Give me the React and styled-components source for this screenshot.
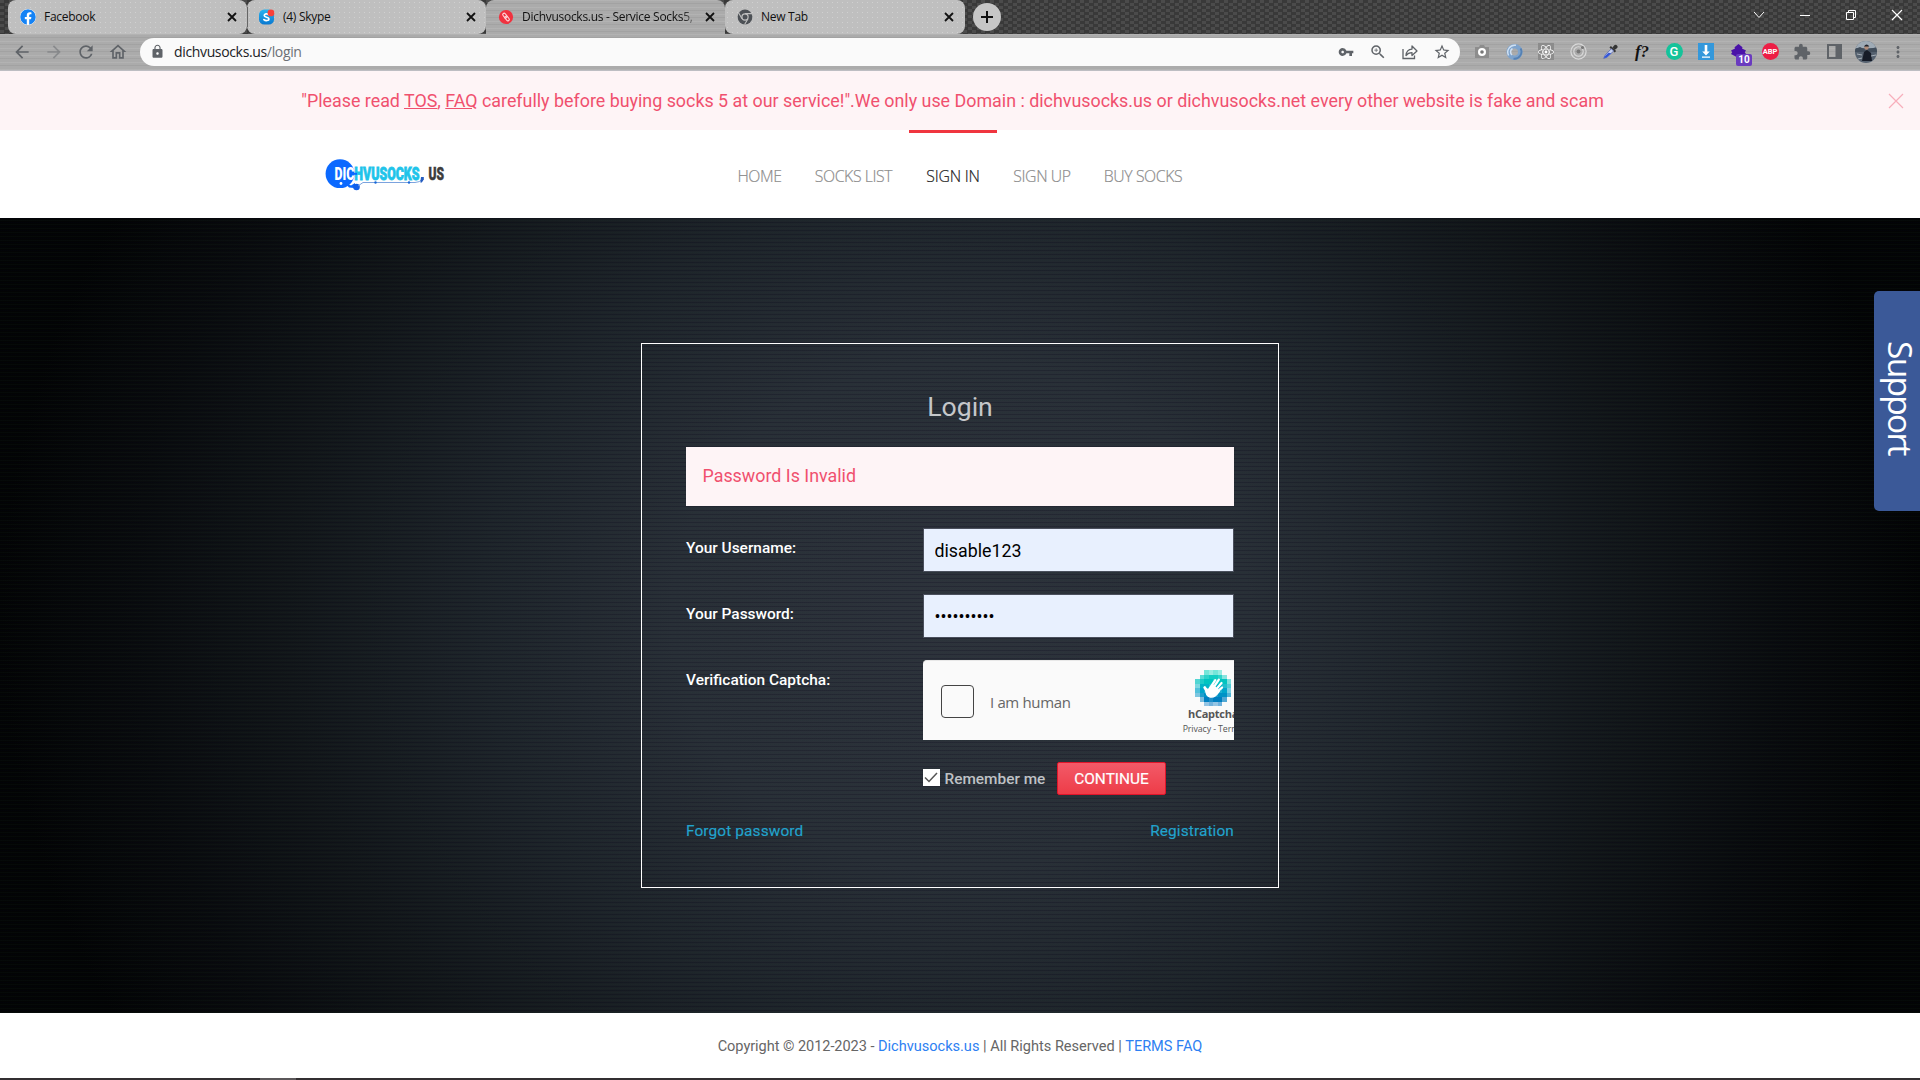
import React from 'react';
import styled, { createGlobalStyle, css } from 'styled-components';
import {
  MdArrowBack, MdArrowForward, MdRefresh, MdOutlineHome, MdLock, MdVpnKey,
  MdZoomIn, MdStarBorder, MdExtension, MdMoreVert,
} from 'react-icons/md';
import { FaFacebook, FaReact } from 'react-icons/fa';

const GlobalStyle = createGlobalStyle`
  * { box-sizing: border-box; }
  body { margin: 0; background: #fff; font-family: Roboto, sans-serif; overflow: hidden; }
  a { color: inherit; }
`;

const ui = css`font-family: "Open Sans", "Noto Sans", sans-serif;`;

const Screen = styled.div`
  display: flex;
  flex-direction: column;
  width: 1920px;
  height: 1080px;
  overflow: hidden;
`;

/* ---------- browser window ---------- */
const TitleBar = styled.div`
  display: flex;
  height: 34px;
  padding-left: 8px;
  background: repeating-conic-gradient(#393939 0 25%, #4b4b4b 0 50%) 0 0 / 9px 6px;
`;

const metal = css`
  background:
    repeating-linear-gradient(180deg, rgba(255,255,255,.09) 0 1px, transparent 1px 3px, rgba(0,0,0,.05) 3px 4px, transparent 4px 7px),
    #ababab;
`;

const Tab = styled.div`
  ${ui}
  display: flex;
  align-items: center;
  width: ${(p) => p.$width}px;
  height: 34px;
  padding: 0 ${(p) => p.$end || 9}px 0 12px;
  border-radius: 8px;
  font-size: 12px;
  letter-spacing: -0.28px;
  color: #111;
  ${(p) => (p.$active ? css`${metal} border-radius: 8px 8px 0 0;` : css`
    background: radial-gradient(circle, #d0d0d0 0.6px, transparent 1px) 0 0 / 5px 5px, #bfbfbf;
  `)}
`;

const TabDivider = styled.span`
  width: 1px;
  height: 20px;
  margin: 7px -1px 0 0;
  background: #666;
  z-index: 1;
`;

const TabIcon = styled.span`
  display: flex;
  width: 16px;
  height: 16px;
  margin-right: 8px;
`;

const TabTitle = styled.span`
  flex: 1;
  overflow: hidden;
  white-space: nowrap;
  line-height: 18px;
  ${(p) => p.$fade && css`mask-image: linear-gradient(90deg, #000 88%, transparent 98%);`}
`;

const FacebookMark = styled(FaFacebook)`
  border-radius: 50%;
  background: #fff;
  color: #1583f5;
`;

const NewTab = styled.div`
  display: flex;
  align-items: center;
  justify-content: center;
  width: 28px;
  height: 28px;
  margin: 3px 0 0 8px;
  border-radius: 50%;
  background: #c6c6c6;
`;

const WindowButtons = styled.div`
  display: flex;
  margin-left: auto;
  height: 29px;
  align-items: center;
  & > svg { width: 46px; height: 14px; }
`;

const Toolbar = styled.div`
  ${metal}
  display: flex;
  align-items: center;
  height: 37px;
  padding: 0 0 1px 11px;
  border-bottom: 1px solid #bdbdc2;
  color: #5f6368;
`;

const NavButton = styled.span`
  display: flex;
  justify-content: center;
  width: 32px;
  font-size: 20px;
  opacity: ${(p) => (p.$dim ? 0.45 : 1)};
  margin-left: ${(p) => (p.$first ? -5 : 0)}px;
`;

const AddressBar = styled.div`
  ${ui}
  display: flex;
  align-items: center;
  flex: none;
  width: 1320px;
  height: 28px;
  margin-left: 6px;
  padding: 0 2px 0 10px;
  border-radius: 14px;
  background: #fafafa;
  font-size: 14px;
  letter-spacing: -0.35px;
  & > svg { flex: none; }
`;

const Url = styled.span`
  flex: 1;
  margin-left: 9px;
  line-height: 20px;
  color: #202124;
  span { color: #6c7075; }
`;

const AddressIcon = styled.span`
  display: flex;
  justify-content: center;
  width: 32px;
  font-size: ${(p) => p.$size || 18}px;
`;

const Extensions = styled.div`
  display: flex;
  align-items: center;
  margin-left: 6px;
`;

const Extension = styled.span`
  display: flex;
  align-items: center;
  justify-content: center;
  position: relative;
  flex: none;
  width: 32px;
  height: 20px;
  font-size: 18px;
`;

const Formula = styled.span`
  font: italic bold 17px/18px "Liberation Serif", serif;
  color: #111;
`;

const Disc = styled.span`
  font: ${(p) => p.$font};
  width: 17px;
  height: 17px;
  border-radius: 50%;
  text-align: center;
  color: #fff;
  background: ${(p) => p.$color};
`;

const CountBadge = styled.span`
  position: absolute;
  left: 14px;
  top: 12px;
  width: 16px;
  height: 12px;
  border-radius: 2px;
  background: #6a3bbf;
  color: #fff;
  font: bold 10px/12px Roboto, sans-serif;
  text-align: center;
`;

const Avatar = styled.span`
  width: 22px;
  height: 22px;
  border-radius: 50%;
  overflow: hidden;
  svg { display: block; }
`;

/* ---------- site ---------- */
const Notice = styled.div`
  display: flex;
  align-items: center;
  justify-content: center;
  height: 59px;
  padding: 0 15px 1px 0;
  position: relative;
  background: #fef4f6;
  color: #f0506e;
  font-size: 17.86px;
  white-space: pre;
`;

const NoticeClose = styled.svg`
  position: absolute;
  right: 16px;
  top: 22px;
  color: #f8aebb;
`;

const Header = styled.header`
  display: flex;
  height: 88px;
  background: #fff;
`;

const LogoBox = styled.div`
  width: 721px;
  padding: 26px 0 0 322px;
`;

const NavItem = styled.a`
  ${ui}
  width: ${(p) => p.$width}px;
  height: 88px;
  border-top: 3px solid ${(p) => (p.$active ? '#f0353f' : 'transparent')};
  padding-top: 1px;
  line-height: 84px;
  text-align: center;
  font-size: 15.8px;
  font-weight: 300;
  letter-spacing: ${(p) => (p.$active ? -0.2 : -0.4)}px;
  color: ${(p) => (p.$active ? '#222' : '#8c8c8c')};
  -webkit-text-stroke: 0.2px currentColor;
`;

const Hero = styled.main`
  display: flex;
  justify-content: center;
  align-items: flex-start;
  position: relative;
  height: 795px;
  padding-top: 125px;
  background:
    repeating-linear-gradient(180deg, rgba(0,0,20,.2) 0 1px, transparent 1px 2px, rgba(30,60,50,.1) 2px 3px, transparent 3px 4px),
    radial-gradient(ellipse 960px 850px at 50% 50%, #2e333c 0%, #292f37 30%, #1e242a 50%, #121619 70%, #090b0d 86%, #030404 100%);
`;

const LoginBox = styled.section`
  width: 638px;
  height: 545px;
  padding: 48px 44px 0;
  border: 1px solid #fff;
`;

const Title = styled.h1`
  margin: 0 0 25px;
  font-size: 26.6px;
  font-weight: 400;
  line-height: 30px;
  text-align: center;
  color: #c5c7ca;
`;

const Alert = styled.div`
  height: 59px;
  padding-left: 16.5px;
  background: #fef4f6;
  color: #f0506e;
  font-size: 17.86px;
  line-height: 58px;
`;

const Row = styled.div`
  display: flex;
  margin-top: 22px;
  height: ${(p) => p.$height}px;
`;

const Label = styled.label`
  width: 237px;
  font-size: 15.45px;
  font-weight: 500;
  line-height: 40px;
  color: #fff;
`;

const Input = styled.input`
  width: 311px;
  height: 44px;
  padding: 0 10.5px;
  border: 1px solid #4a4f5c;
  border-radius: 0;
  outline: none;
  background: #e8f0fe;
  color: #000;
  font: 17.8px Roboto, sans-serif;
`;

const Captcha = styled.div`
  ${ui}
  display: flex;
  align-items: center;
  width: 311px;
  height: 80px;
  padding-left: 18px;
  overflow: hidden;
  border-radius: 4px 0 0 0;
  border-top: 1px solid #e8e8e8;
  background: #fafafa;
  color: #555;
  font-size: 15px;
  letter-spacing: -0.35px;
`;

const CaptchaCheck = styled.span`
  flex: none;
  width: 33px;
  height: 33px;
  margin: 2px 16px 0 0;
  border: 1px solid #444;
  border-radius: 4px;
`;

const CaptchaText = styled.span`
  flex: none;
  width: 188px;
  margin-top: 3px;
  color: #666;
`;

const CaptchaBrand = styled.span`
  flex: none;
  display: flex;
  flex-direction: column;
  align-items: center;
  width: 70px;
  align-self: flex-start;
  margin-top: 9px;
  white-space: nowrap;
`;

const BrandName = styled.b`
  margin-top: 1px;
  font-size: 11px;
  line-height: 14px;
  letter-spacing: -0.25px;
`;

const BrandLinks = styled.span`
  margin-top: 1px;
  font-size: 8.8px;
  line-height: 14px;
  letter-spacing: -0.1px;
`;

const Actions = styled.div`
  display: flex;
  align-items: flex-start;
  height: 33px;
  margin: 22px 0 26px 237px;
`;

const CheckBox = styled.span`
  width: 17px;
  height: 17px;
  margin-top: 7px;
  background: #fff;
  svg { display: block; }
`;

const Remember = styled.span`
  width: 112.5px;
  margin-left: 4.5px;
  font-size: 15.4px;
  line-height: 34px;
  font-weight: 500;
  color: #bfc1c5;
`;

const Continue = styled.button`
  width: 109px;
  height: 33px;
  padding: 1px 0 0;
  border: 1px solid #e1152a;
  border-radius: 2px;
  background: linear-gradient(#f25a68, #ee3c48);
  color: #fff;
  font: 400 15.4px/30px Roboto, sans-serif;
  -webkit-text-stroke: 0.2px #fff;
`;

const Links = styled.div`
  display: flex;
  justify-content: space-between;
  font-size: 15.4px;
  line-height: 20px;
  letter-spacing: 0.12px;
  color: #22a3cd;
  -webkit-text-stroke: 0.15px currentColor;
`;

const Support = styled.div`
  ${ui}
  position: absolute;
  right: 0;
  top: 73px;
  display: flex;
  align-items: center;
  justify-content: center;
  width: 46px;
  height: 220px;
  padding: 0 0 7px 8px;
  border-radius: 5px 0 0 5px;
  background: #3b5998;
  color: #fff;
  font-size: 33.5px;
  line-height: 36px;
  letter-spacing: -1.7px;
  writing-mode: vertical-rl;
`;

const Footer = styled.footer`
  height: 65px;
  font-size: 14.56px;
  line-height: 66px;
  text-align: center;
  color: #666;
  background: #fff;
`;

const Lead = styled.span`letter-spacing: -0.05px;`;
const Blue = styled.span`color: #2d80f2;`;

const TaskBar = styled.div`
  height: 2px;
  padding-left: 260px;
  background: #332f31;
`;

const TaskItem = styled.div`
  width: 36px;
  height: 2px;
  background: #5b5759;
`;

/* ---------- drawings ---------- */
const Cross = () => (
  <svg width="12" height="12" viewBox="0 0 12 12" stroke="#111" strokeWidth="1.8"><path d="M2 2l8 8M10 2l-8 8" /></svg>
);

const SkypeIcon = () => (
  <svg width="17" height="17" viewBox="0 0 17 17">
    <defs><linearGradient id="sky" x2="0" y2="1"><stop stopColor="#27b4f0" /><stop offset="1" stopColor="#0a78d0" /></linearGradient></defs>
    <rect x="0" y="0" width="16" height="16" rx="5.5" fill="url(#sky)" />
    <path d="M10.6 5.4C8.8 4 5.4 4.6 5.6 6.6c.2 2 5 1.2 5 3.4 0 2-3.6 2.3-5.4.7" fill="none" stroke="#fff" strokeWidth="1.8" strokeLinecap="round" />
    <circle cx="12.7" cy="3.7" r="3.6" fill="#f9423a" />
  </svg>
);

const SocksIcon = () => (
  <svg width="16" height="16" viewBox="0 0 16 16">
    <circle cx="8" cy="8" r="7.1" fill="#f0323f" />
    <g fill="none" stroke="#ffd9dc" strokeWidth="1.1" transform="rotate(-38 8 8)"><rect x="6.6" y="3.6" width="2.8" height="5.2" rx="1.4" /><rect x="6.6" y="7.2" width="2.8" height="5.2" rx="1.4" /></g>
  </svg>
);

const ChromeIcon = () => (
  <svg width="16" height="16" viewBox="0 0 16 16">
    <circle cx="8" cy="8" r="7.4" fill="#4d5156" />
    <circle cx="8" cy="8" r="3.7" fill="#c0c0c0" />
    <circle cx="8" cy="8" r="2.5" fill="#4d5156" />
    <path d="M8 4.6h7M5 9.7L1.6 3.8M11 9.7l-3.4 5.9" stroke="#c0c0c0" strokeWidth="1.1" />
  </svg>
);

const ShareIcon = () => (
  <svg width="16" height="16" viewBox="0 0 16 16" fill="none" stroke="#5f6368" strokeWidth="1.3">
    <path d="M1 5v9.5h11.5V11.5" />
    <path d="M4 11.5c.3-4 2.500-6.200 6-6.400V2l5 5-5 4.500V8.600c-2.800 0-4.500.8-6 2.900z" strokeLinejoin="round" />
  </svg>
);

const CameraIcon = () => (
  <svg width="14" height="13" viewBox="0 0 14 13"><path d="M0 2h4l1-2h4l1 2h4v11H0z" fill="#8d8d8d" /><circle cx="7" cy="7" r="4" fill="#fff" /><circle cx="7" cy="7" r="1.8" fill="#777" /></svg>
);

const SwirlIcon = () => (
  <svg width="17" height="18" viewBox="0 0 17 18" fill="none">
    <circle cx="8.5" cy="9" r="5.8" stroke="#7ea3cc" strokeWidth="4.6" />
    <path d="M2.6 12.5A7 7 0 0 1 10 2.3M6 12a4 4 0 0 1 .5-6.5" stroke="#cfe0f2" strokeWidth="1.5" />
    <path d="M14.6 5.5A7 7 0 0 1 7.5 15.7" stroke="#5581b3" strokeWidth="1.8" />
  </svg>
);

const TargetIcon = () => (
  <svg width="17" height="17" viewBox="0 0 17 17" fill="none" stroke="#dadada">
    <circle cx="8.5" cy="8.5" r="7.6" strokeWidth="1.2" /><circle cx="8.5" cy="8.5" r="4.7" strokeWidth="1.1" />
    <circle cx="8.5" cy="8.5" r="1.9" fill="#777" stroke="none" /><circle cx="12.5" cy="4.5" r="1.6" fill="#777" stroke="none" />
  </svg>
);

const DropperIcon = () => (
  <svg width="16" height="16" viewBox="0 0 16 16">
    <path d="M10.5 3.5l1.8-2.300q1.500-1 2.700.2t.2 2.500l-2.600 2.200z" fill="#333" />
    <path d="M8.2 2.800l5.200 5" stroke="#333" strokeWidth="2" />
    <path d="M9.3 4.800L3 11.200l-1.300 3.200L5 13.200 11.700 7z" fill="#c8d2ee" stroke="#5968b0" strokeWidth=".8" />
    <path d="M6.5 8.800L3 12l-1.300 2.600L5 13.200l4.200-4z" fill="#3457d8" />
  </svg>
);

const ReactTile = styled.span`
  display: flex;
  width: 16px;
  height: 17px;
  align-items: center;
  background: #8c8c8c;
  color: #fff;
  font-size: 16px;
`;

const DownloadIcon = () => (
  <svg width="16" height="17" viewBox="0 0 16 17"><rect width="16" height="17" fill="#3498db" /><path d="M6.7 2h2.600v6.500h2.500L8 12.500 4.200 8.500h2.500zM4 13.500h8v1.200H4z" fill="#fff" /></svg>
);

const LayersIcon = () => (
  <svg width="17" height="16" viewBox="0 0 17 16"><path d="M8.5 0l4 3.300-.5 1.200 4 2-1.200 1.700 1.200 1.800-7.500 4-7.500-4 1.200-1.800L1 6.500l4-2-.5-1.200z" fill="#4a12a8" /></svg>
);

const PanelIcon = () => (
  <svg width="15" height="15" viewBox="0 0 15 15"><rect x="1" y="1" width="13" height="13" fill="none" stroke="#5f6368" strokeWidth="2" /><rect x="8.5" y="1" width="5.5" height="13" fill="#5f6368" /></svg>
);

const Portrait = () => (
  <svg width="22" height="22" viewBox="0 0 22 22">
    <rect width="22" height="22" fill="#55616f" /><rect width="22" height="7" fill="#9fabb6" />
    <path d="M0 8l5-2 6 3 11-3v5H0z" fill="#414d5b" />
    <path d="M7 20l2-9 3-2 4 3 1 8z" fill="#161c28" /><circle cx="11.5" cy="6.5" r="2.2" fill="#b08c7a" /><path d="M8.8 5.500q3-4 5.500 0z" fill="#20242c" />
    <path d="M2 13l5 1M16 15l5-1M3 18l4-1" stroke="#a7b0b9" />
  </svg>
);

const Logo = () => (
  <svg width="150" height="40" viewBox="0 0 150 40">
    <circle cx="18" cy="17.7" r="14.400" fill="#0b69ff" />
    <path d="M22 26l7 3.500 4-2.500v2l-1 3-5-.5z" fill="#0b69ff" />
    <circle cx="34.5" cy="31" r="3.300" fill="#1260e8" />
    <path d="M36 30l5-3.500h52q5 0 7-3.500" fill="none" stroke="#6d98da" strokeWidth="0.9" />
    <circle cx="53.5" cy="26.500" r="1.200" fill="#1766d8" /><circle cx="87" cy="26.500" r="1.200" fill="#1766d8" /><circle cx="19" cy="27.500" r="1.400" fill="#fff" />
    <text x="12.500" y="24" textLength="85" lengthAdjust="spacingAndGlyphs" fontFamily="Roboto, sans-serif" fontWeight="900" fontSize="17.5" strokeWidth=".8">
      <tspan fill="#fff">DIC</tspan><tspan fill="#1fc4ea" stroke="#1fc4ea">HVUSOCKS</tspan>
    </text>
    <path d="M30 17.800h5" stroke="#0b69ff" strokeWidth="2" />
    <path d="M99 21h2.800v2.500l-2 3h-1.500z" fill="#245cc0" />
    <text x="106.500" y="24" textLength="15.500" lengthAdjust="spacingAndGlyphs" fontFamily="Roboto, sans-serif" fontWeight="900" fontSize="17.5" fill="#3c3c3c" stroke="#3c3c3c" strokeWidth=".5">US</text>
  </svg>
);

const rows = [[2, 6], [1, 7], [0, 8], [0, 8], [0, 8], [0, 8], [1, 7], [2, 6]];
const tones = ['#35dcc8', '#12cdc3', '#00c4c0', '#00b5c6', '#00a5cb', '#0092c6', '#007fc0', '#2f8fce'];
const CaptchaLogo = () => (
  <svg width="36" height="36" viewBox="0 0 8 8">
    <g shapeRendering="crispEdges">
      {rows.flatMap(([from, to], y) => Array.from({ length: to - from }, (_, i) => {
        const x = from + i;
        const edge = x === from || x === to - 1 || y === 0 || y === 7;
        return <rect key={`${x}-${y}`} x={x} y={y} width="1" height="1" fill={tones[y]} opacity={edge ? ((x + y) % 2 ? 0.5 : 0.68) : (x + y) % 3 ? 1 : 0.88} />;
      }))}
    </g>
    <g stroke="#fff" strokeLinecap="round" strokeWidth=".62" fill="#fff">
      <path d="M2.150 3.900L3 5.200" />
      <path d="M3.200 4.200L4.500 2.250M3.700 4.500L5.300 2.150M4.200 4.900L5.900 2.900M4.500 5.200L6 3.900" strokeWidth=".5" />
      <path d="M2.400 4.100q-.1 1.700 1 1.900t2-1.300L4 3.400l-1 1z" strokeWidth=".3" />
    </g>
  </svg>
);

export default function App() {
  return (
    <Screen>
      <GlobalStyle />
      <TitleBar>
        <Tab $width={239}><TabIcon><FacebookMark size={16} /></TabIcon><TabTitle>Facebook</TabTitle><Cross /></Tab>
        <TabDivider />
        <Tab $width={239}><TabIcon><SkypeIcon /></TabIcon><TabTitle>(4) Skype</TabTitle><Cross /></Tab>
        <Tab $width={239} $active><TabIcon><SocksIcon /></TabIcon><TabTitle $fade>Dichvusocks.us - Service Socks5,</TabTitle><Cross /></Tab>
        <Tab $width={240} $end={10}><TabIcon><ChromeIcon /></TabIcon><TabTitle>New Tab</TabTitle><Cross /></Tab>
        <NewTab><svg width="12" height="12" stroke="#111" strokeWidth="2"><path d="M6 0v12M0 6h12" /></svg></NewTab>
        <WindowButtons>
          <svg viewBox="0 0 46 14" fill="none" stroke="#fff"><path d="M18 4l5 5.500 5-5.500" /></svg>
          <svg viewBox="0 0 46 14" stroke="#fff"><path d="M18 7.500h10" /></svg>
          <svg viewBox="0 0 46 14" fill="none" stroke="#fff"><path d="M18.500 4.500h7v7h-7zM20.500 4.500v-2h7v7h-2" /></svg>
          <svg viewBox="0 0 46 14" stroke="#fff" strokeWidth="1.2"><path d="M18 2l10 10M28 2L18 12" /></svg>
        </WindowButtons>
      </TitleBar>
      <Toolbar>
        <NavButton $first><MdArrowBack /></NavButton>
        <NavButton $dim><MdArrowForward /></NavButton>
        <NavButton><MdRefresh /></NavButton>
        <NavButton><MdOutlineHome /></NavButton>
        <AddressBar>
          <MdLock size={15} />
          <Url>dichvusocks.us<span>/login</span></Url>
          <AddressIcon $size={16}><MdVpnKey /></AddressIcon>
          <AddressIcon><MdZoomIn /></AddressIcon>
          <AddressIcon><ShareIcon /></AddressIcon>
          <AddressIcon><MdStarBorder /></AddressIcon>
        </AddressBar>
        <Extensions>
          <Extension><CameraIcon /></Extension>
          <Extension><SwirlIcon /></Extension>
          <Extension><ReactTile><FaReact /></ReactTile></Extension>
          <Extension><TargetIcon /></Extension>
          <Extension><DropperIcon /></Extension>
          <Extension><Formula>f?</Formula></Extension>
          <Extension><Disc $color="#15c39a" $font="500 13px/17px Roboto, sans-serif">G</Disc></Extension>
          <Extension><DownloadIcon /></Extension>
          <Extension><LayersIcon /><CountBadge>10</CountBadge></Extension>
          <Extension><Disc $color="#ed1e45" $font="bold 7.5px/17px Roboto, sans-serif">ABP</Disc></Extension>
          <Extension><MdExtension /></Extension>
          <Extension><PanelIcon /></Extension>
          <Extension><Avatar><Portrait /></Avatar></Extension>
          <Extension><MdMoreVert /></Extension>
        </Extensions>
      </Toolbar>

      <Notice>
        <span>"Please read <u>TOS</u>, <u>FAQ</u> carefully before buying socks 5 at our service!".We only use Domain : dichvusocks.us or dichvusocks.net every other website is fake and scam</span>
        <NoticeClose width="16" height="16" stroke="currentColor" strokeWidth="1.2"><path d="M1 1l14 14M15 1L1 15" /></NoticeClose>
      </Notice>

      <Header>
        <LogoBox><Logo /></LogoBox>
        <NavItem $width={77}>HOME</NavItem>
        <NavItem $width={111}>SOCKS LIST</NavItem>
        <NavItem $width={88} $active>SIGN IN</NavItem>
        <NavItem $width={90}>SIGN UP</NavItem>
        <NavItem $width={112}>BUY SOCKS</NavItem>
      </Header>

      <Hero>
        <LoginBox>
          <Title>Login</Title>
          <Alert>Password Is Invalid</Alert>
          <Row $height={44}><Label>Your Username:</Label><Input defaultValue="disable123" /></Row>
          <Row $height={44}><Label>Your Password:</Label><Input type="password" defaultValue="disable123" /></Row>
          <Row $height={80}>
            <Label>Verification Captcha:</Label>
            <Captcha>
              <CaptchaCheck />
              <CaptchaText>I am human</CaptchaText>
              <CaptchaBrand>
                <CaptchaLogo />
                <BrandName>hCaptcha</BrandName>
                <BrandLinks>Privacy - Terms</BrandLinks>
              </CaptchaBrand>
            </Captcha>
          </Row>
          <Actions>
            <CheckBox><svg width="17" height="17" fill="none" stroke="#555" strokeWidth="1.5"><path d="M2 8.500l4 4L14 4" /></svg></CheckBox>
            <Remember>Remember me</Remember>
            <Continue>CONTINUE</Continue>
          </Actions>
          <Links><span>Forgot password</span><span>Registration</span></Links>
        </LoginBox>
        <Support>Support</Support>
      </Hero>

      <Footer><Lead>Copyright © 2012-2023 - </Lead><Blue>Dichvusocks.us</Blue> | All Rights Reserved | <Blue>TERMS FAQ</Blue></Footer>
      <TaskBar><TaskItem /></TaskBar>
    </Screen>
  );
}
